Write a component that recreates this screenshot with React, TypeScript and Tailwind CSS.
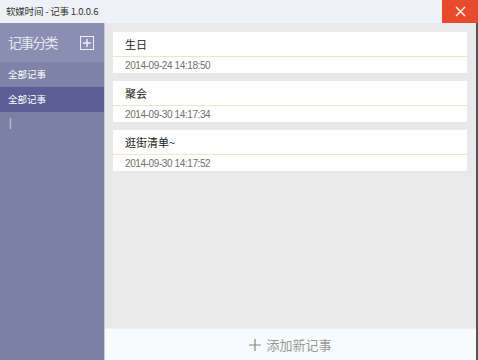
import React from "react";

const notes = [
  { title: "生日", date: "2014-09-24 14:18:50" },
  { title: "聚会", date: "2014-09-30 14:17:34" },
  { title: "逛街清单~", date: "2014-09-30 14:17:52" },
];

const cjk = '"Noto Sans CJK SC", "Noto Sans", sans-serif';

export default function App() {
  return (
    <div className="w-[478px] h-[360px] flex flex-col overflow-hidden" style={{ fontFamily: cjk }}>
      <div className="h-[23px] flex items-center bg-[#eef2f6] shrink-0">
        <div className="flex-1 pl-[6px] text-[9.5px] tracking-[-0.2px] text-[#333] leading-none">软媒时间 - 记事 1.0.0.6</div>
        <div className="w-[36px] h-[23px] bg-[#e84a2c] flex items-center justify-center">
          <svg width="11" height="11" viewBox="0 0 11 11">
            <path d="M1 1L10 10M10 1L1 10" stroke="#fff" strokeWidth="1.3" />
          </svg>
        </div>
      </div>
      <div className="flex-1 flex min-h-0">
        <div className="w-[105px] bg-[#7b80a4] border-r border-[#c9cbd9] flex flex-col shrink-0">
          <div className="h-[39px] bg-[#8a8eb3] flex items-center justify-between pl-[8px] pr-[10px]">
            <span className="text-[14px] tracking-[-1.8px] text-[#e6e7f0]">记事分类</span>
            <svg width="14" height="14" viewBox="0 0 14 14">
              <rect x="0.5" y="0.5" width="13" height="13" fill="none" stroke="#eef" strokeWidth="1" />
              <path d="M3 7H11M7 3V11" stroke="#eef" strokeWidth="1.4" />
            </svg>
          </div>
          <div className="h-[25px] bg-[#7e82a7] flex items-center pl-[8px] text-[9.5px] text-white">全部记事</div>
          <div className="h-[25px] bg-[#5b5f95] flex items-center pl-[8px] text-[9.5px] text-white">全部记事</div>
          <div className="pl-[9px] pt-[5px] text-[10px] text-[#e0e2ee] leading-none">|</div>
        </div>
        <div className="flex-1 flex flex-col bg-[#e8e9e8] border-r-2 border-[#555]">
          <div className="flex-1 flex flex-col gap-[8px] pt-[9px] pl-[8px] pr-[9px]">
            {notes.map((n) => (
              <div key={n.date} className="bg-white flex flex-col">
                <div className="h-[25px] flex items-center pl-[12px] text-[11px] text-[#222] border-b border-[#f6e2c8]">
                  {n.title}
                </div>
                <div
                  className="h-[16px] flex items-center pl-[12px] text-[10px] tracking-[-0.4px] text-[#6f6f6f]"
                  style={{ fontFamily: '"Liberation Sans", Arial, sans-serif' }}
                >
                  {n.date}
                </div>
              </div>
            ))}
          </div>
          <div className="h-[32px] bg-[#f8fbfb] border-t border-[#eef0f0] flex items-center justify-center gap-[5px]">
            <svg width="12" height="12" viewBox="0 0 12 12">
              <path d="M0 6H12M6 0V12" stroke="#888" strokeWidth="1.2" />
            </svg>
            <span className="text-[13px] text-[#999]">添加新记事</span>
          </div>
        </div>
      </div>
    </div>
  );
}
